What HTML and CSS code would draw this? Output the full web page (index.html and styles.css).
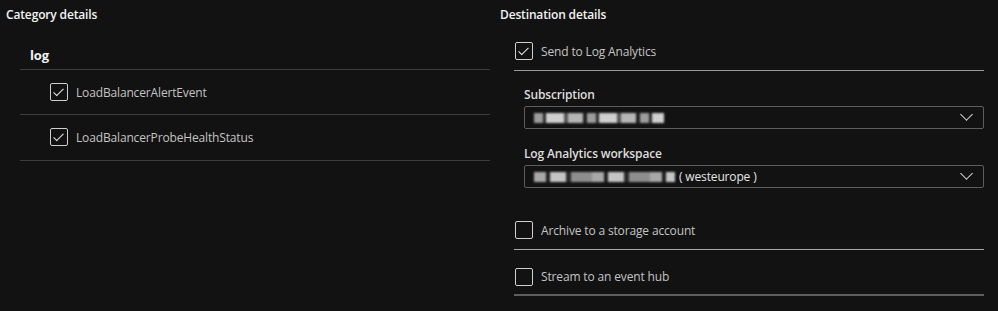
FILE: index.html
```html
<!DOCTYPE html>
<html lang="en">
<head>
  <meta charset="UTF-8" />
  <title>Diagnostic setting</title>
  <link rel="stylesheet" href="styles.css">
</head>
<body>
  <main class="settings">
    <section class="col col-left">
      <h3 class="col-title">Category details</h3>
      <div class="group-name">log</div>
      <ul class="cat-list">
        <li class="check-row">
          <span class="box checked"></span>
          <span class="check-label">LoadBalancerAlertEvent</span>
        </li>
        <li class="check-row">
          <span class="box checked"></span>
          <span class="check-label">LoadBalancerProbeHealthStatus</span>
        </li>
      </ul>
    </section>

    <section class="col col-right">
      <h3 class="col-title">Destination details</h3>
      <div class="dest">
        <div class="dest-row dest-first">
          <span class="box checked"></span>
          <span class="check-label">Send to Log Analytics</span>
        </div>

        <div class="fields">
          <label class="field-label">Subscription</label>
          <div class="dropdown">
            <span class="redacted redacted-sub"></span>
            <span class="chevron"></span>
          </div>

          <label class="field-label field-gap">Log Analytics workspace</label>
          <div class="dropdown">
            <span class="redacted redacted-ws"></span>
            <span class="region">( westeurope )</span>
            <span class="chevron"></span>
          </div>
        </div>

        <div class="dest-row dest-archive">
          <span class="box"></span>
          <span class="check-label">Archive to a storage account</span>
        </div>
        <div class="dest-row dest-stream">
          <span class="box"></span>
          <span class="check-label">Stream to an event hub</span>
        </div>
      </div>
    </section>
  </main>
</body>
</html>
```

FILE: styles.css
```css
body {
  margin: 0;
  background-color: #121212;
  font-family: 'Open Sans', 'Noto Sans', sans-serif;
  font-size: 12px;
  letter-spacing: -0.15px;
  color: #c8c8c8;
  height: 311px;
  overflow: hidden;
}

.settings {
  display: flex;
}

.col-left {
  width: 490px;
}

.col-right {
  width: 484px;
  padding-left: 10px;
}

.col-title {
  margin: 0;
  height: 30px;
  line-height: 30px;
  font-size: 12px;
  font-weight: 600;
  color: #f2f2f2;
}

.col-left .col-title {
  padding-left: 6px;
}

.group-name {
  padding: 14px 0 3px 30px;
  line-height: 22px;
  font-weight: 700;
  font-size: 13px;
  color: #f2f2f2;
}

.cat-list {
  list-style: none;
  margin: 0 0 0 20px;
  padding: 0 0 1px;
  border-bottom: 1px solid #3c3c3c;
}

.check-row {
  display: flex;
  align-items: center;
  gap: 8px;
  height: 44px;
  padding-left: 30px;
  border-top: 1px solid #3c3c3c;
}

.box {
  position: relative;
  width: 16px;
  height: 16px;
  border: 1px solid #cfcfcf;
  border-radius: 2px;
  flex: none;
}

.box.checked::after {
  content: "";
  position: absolute;
  left: 5px;
  top: 2px;
  width: 4px;
  height: 9px;
  border: solid #e6e6e6;
  border-width: 0 1px 1px 0;
  transform: rotate(45deg);
}

.check-label {
  color: #c4c4c4;
}

.dest {
  margin-left: 14px;
  width: 470px;
}

.dest-row {
  display: flex;
  align-items: center;
  gap: 8px;
  padding-left: 1px;
}

.dest-first {
  height: 41px;
  padding-top: 2px;
  box-sizing: border-box;
  border-bottom: 1px solid #9a9a9a;
}

.fields {
  padding: 15px 0 0 10px;
}

.field-label {
  display: block;
  line-height: 18px;
  margin-bottom: 2px;
  font-weight: 600;
  color: #dcdcdc;
}

.field-gap {
  margin-top: 16px;
}

.dropdown {
  position: relative;
  display: flex;
  align-items: center;
  height: 23px;
  box-sizing: border-box;
  border: 1px solid #5c5c5c;
  border-radius: 2px;
  padding-left: 9px;
  color: #e6e6e6;
}

.redacted {
  height: 10px;
  filter: blur(1.2px);
}

.redacted-sub {
  width: 130px;
  background: repeating-linear-gradient(90deg, #9c9c9c 0 9px, #2a2a2a 9px 12px, #cfcfcf 12px 30px, #555 30px 34px, #b5b5b5 34px 49px, #202020 49px 53px);
}

.redacted-ws {
  width: 141px;
  background: repeating-linear-gradient(90deg, #a8a8a8 0 12px, #1e1e1e 12px 16px, #c4c4c4 16px 32px, #2a2a2a 32px 37px, #8e8e8e 37px 58px);
}

.region {
  margin-left: 4px;
}

.chevron {
  position: absolute;
  right: 12px;
  top: 3px;
  width: 8px;
  height: 8px;
  border: solid #dcdcdc;
  border-width: 0 1px 1px 0;
  transform: rotate(45deg);
}

.dest-archive {
  margin-top: 23px;
  height: 38px;
  border-bottom: 1px solid #a8a8a8;
}

.dest-stream {
  height: 46px;
  padding-top: 9px;
  box-sizing: border-box;
  border-bottom: 2px solid #5e5e5e;
}
```
